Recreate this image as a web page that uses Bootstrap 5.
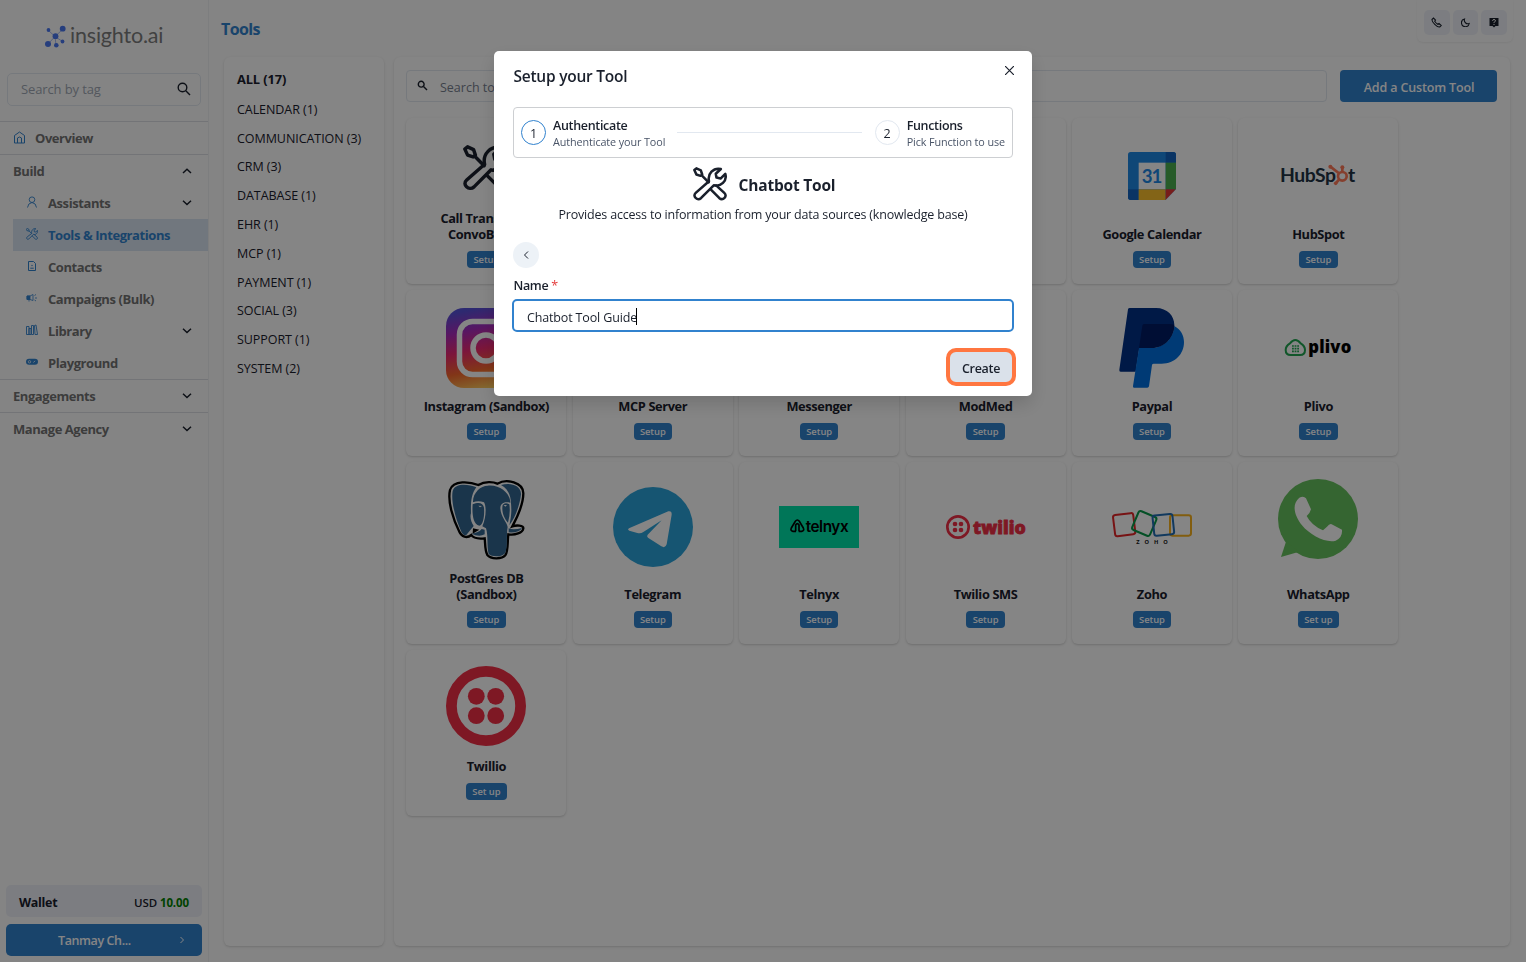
<!DOCTYPE html>
<html lang="en">
<head>
<meta charset="utf-8">
<meta name="viewport" content="width=device-width, initial-scale=1">
<title>insighto.ai - Tools</title>
<link href="https://cdn.jsdelivr.net/npm/bootstrap@5.3.0/dist/css/bootstrap.min.css" rel="stylesheet">
<style>
:root{--brand:#3182ce;--ink:#1a202c;--line:#e2e8f0}
body{font-family:"Open Sans","Noto Sans",sans-serif;font-size:12.5px;line-height:16px;color:var(--ink);background:#fdfdfd;height:962px;overflow:hidden}
svg{display:block;flex:none}
.shell{height:962px}
.side{width:209px;border-right:1px solid #f0f1f4;background:#fefefe}
.brand-row{height:73px;padding:25px 0 0 44px}
.brand-row svg,.tool>svg{overflow:visible}
.tag-box{height:33px;margin:0 7px;border:1px solid var(--line);border-radius:5px;padding:0 9px 2px 13px;color:#a0a8b4;font-size:13px;letter-spacing:-.12px}
.side-row{height:33px;padding:0 13px;font-weight:700;color:#747474;letter-spacing:-.44px;font-size:13px;border-top:1px solid #dcdfe4}
.side-row.home{margin-top:15px}
.side-row.home svg{margin:-1px 9px 0 0}
.side-row .chev,.sub-row .chev{margin-left:auto;margin-right:2px}
.sub-row{height:32px;margin-left:13px;padding:0 13px;font-weight:700;color:#747474;letter-spacing:-.42px;font-size:13px}
.sub-row>svg:first-child{margin-right:10px;color:var(--brand);margin-top:-3px}
.sub-row.on{background:#d8e4f2;color:var(--brand)}
.wallet{height:32px;margin:0 6px 7px;border-radius:5px;background:#edf0f8;padding:3px 13px 0;font-weight:700;letter-spacing:-.3px}
.wallet small{font-size:11.5px;font-weight:600;letter-spacing:-.1px}
.user-btn{height:32px;margin:0 7px 6px 6px;border-radius:5px;background:var(--brand);color:#fff;font-weight:600;letter-spacing:-.4px;width:196px;padding:0 17px 0 52px}
.user-btn span{padding-top:2px}
.page-title{font-weight:700;font-size:16px;letter-spacing:-.6px;color:var(--brand);padding:19px 0 0 12px;line-height:20px}
.quick{width:96px;height:42px;border-radius:0 0 6px 6px;box-shadow:0 1px 2px rgba(0,0,0,.06);margin-right:13px;padding:10px 6px 7px 7px;gap:3px}
.quick span{width:26px;height:25px;border-radius:5px;background:#edf0f8}
.panel{border-radius:6px;box-shadow:0 1px 3px rgba(0,0,0,.1),0 1px 2px rgba(0,0,0,.06);background:#fff;height:889px}
.cats{width:160px;padding:9px 13px;font-size:12.5px;letter-spacing:-.06px}
.cats div{height:28.8px;line-height:30px;white-space:nowrap}
.cats div:first-child{font-weight:700;font-size:12.8px;letter-spacing:-.1px;line-height:27.5px}
.find{height:32px;border:1px solid var(--line);border-radius:4px;color:#77808f;padding:3px 10px 0;width:921px}
.find svg{margin:-4px 12px 0 0}
.add-btn{width:157px;height:32px;border-radius:4px;background:var(--brand);color:#fff;font-weight:600;letter-spacing:-.15px;padding:3px 0 0 1px}
.tools{display:grid;grid-template-columns:repeat(6,160px);grid-template-rows:166px 166px 182px 166px;gap:6px 6.4px;margin:16px 0 0 .4px}
.tool{border-radius:6px;box-shadow:0 1px 3px rgba(0,0,0,.1),0 1px 2px rgba(0,0,0,.08);padding:18px 10px 16px}
.tool.low{padding-top:25px}
.tool.whats{padding-top:17px}
.tool.ring{padding-top:16px}
.tool b{margin-top:auto;font-size:12.8px;letter-spacing:-.37px;line-height:15.5px;white-space:nowrap;text-align:center}
.tool i{font-style:normal;font-size:9.4px;font-weight:600;letter-spacing:-.05px;line-height:17px;height:17px;padding:0 6.3px;border-radius:4px;background:var(--brand);color:#fff;margin-top:9px}
.shade{position:fixed;inset:0;background:rgba(0,0,0,.48)}
.dialog-box{width:538px;height:345px;margin:51px 0 0 494px;border-radius:5px;background:#fff;padding:15px 19px;box-shadow:0 8px 18px rgba(0,0,0,.15)}
.dialog-box h1{font-size:15.5px;font-weight:600;letter-spacing:-.24px;line-height:21px;height:20px;margin:0;padding-left:.5px}
.steps{height:51px;border:1px solid #cdcfd2;border-radius:4px;margin-top:21px;padding:0 7px}
.dot{width:25px;height:25px;border-radius:50%;border:1px solid var(--line);font-size:12.5px;padding-top:2px}
.dot.on{border-color:var(--brand)}
.step-t{font-weight:600;letter-spacing:-.32px;line-height:17px;padding-top:2px}
.step-d{font-size:10.8px;letter-spacing:-.1px;color:#4a5568;line-height:16px}
.rule{height:1px;background:var(--line);flex:1;margin:0 13px 0 12px}
.tool-name{font-size:15.5px;font-weight:700;letter-spacing:-.2px;padding-top:1.5px}
.desc{letter-spacing:-.19px;margin-top:6px}
.back{width:26px;height:26px;border-radius:50%;background:#edf2f7;margin-top:19px}
.lab{font-weight:600;letter-spacing:-.35px;margin-top:9.5px;padding-left:.5px}
.field{height:33px;border:2px solid var(--brand);border-radius:5px;margin:5.500px -1px 0;padding:4px 13px 0;letter-spacing:-.15px}
.caret{width:1px;height:17px;background:#000;margin:-3px 0 0 -1px}
.create{width:70px;height:38px;border:4px solid #ff7640;border-radius:10px;background:#dae1ea;font-weight:600;letter-spacing:-.3px;margin:16px -3px 0 auto;padding-top:3px}
</style>
</head>
<body>
<svg width="0" height="0" class="position-absolute">
<symbol id="wrench" viewBox="0 0 100 100"><g fill="none" stroke="currentColor" stroke-width="7.500" stroke-linejoin="round" stroke-linecap="round"><path d="M4 9L10 4L23 10L27 22L22 26L10 22ZM25 24L46 45"/><path d="M47 42C42 20 60 1 82 6L67 20L69 31L81 34L95 20C101 41 82 59 61 54L24 91C13 101 -3 86 8 76Z"/><path d="M52 66L77 91C88 101 103 86 92 76L68 54"/></g></symbol>
<symbol id="down" viewBox="0 0 12 12"><path d="M2 3.800L6 7.500L10 3.800" fill="none" stroke="#1a202c" stroke-width="1.500"/></symbol>
<symbol id="up" viewBox="0 0 12 12"><path d="M2 8L6 4.300L10 8" fill="none" stroke="#1a202c" stroke-width="1.500"/></symbol>
</svg>
<div class="shell d-flex">
<aside class="side d-flex flex-column flex-shrink-0">
  <div class="brand-row">
    <svg width="122" height="28" viewBox="0 0 122 28"><g stroke="#8fa8f0" stroke-width=".8" fill="none"><path d="M4 5L11 11.500L19 4M4 19L11 11.500L12 20M11 11.500L18.500 16.500"/></g><g fill="#4a78f0"><circle cx="4.500" cy="5" r="1.900"/><circle cx="18.700" cy="3.700" r="2.900"/><circle cx="11.500" cy="11.200" r="2.900"/><circle cx="4" cy="19" r="3"/><circle cx="12.300" cy="20.300" r="2.300"/><circle cx="18.500" cy="16.500" r="1.900"/></g><text x="26" y="17.500" textLength="93.500" font-family="Lato" font-size="21.500" fill="#7d7d7d">insighto.ai</text></svg>
  </div>
  <div class="tag-box d-flex align-items-center justify-content-between">Search by tag
    <svg width="14" height="14" viewBox="0 0 14 14" fill="none" stroke="#1a202c" stroke-width="1.400"><circle cx="5.500" cy="5.500" r="4.300"/><path d="M8.800 8.800L13 13"/></svg></div>
  <div class="side-row home d-flex align-items-center">
    <svg width="13" height="13" viewBox="0 0 13 13" fill="none" stroke="#3182ce"><path d="M1.500 12V4.500L6.500 1L11.500 4.500V12ZM4.500 12V7Q6.500 5 8.500 7V12"/></svg><span>Overview</span></div>
  <div class="side-row d-flex align-items-center">Build<svg class="chev" width="12" height="12"><use href="#up"/></svg></div>
  <div class="sub-row d-flex align-items-center"><svg width="12" height="12" viewBox="0 0 12 12" fill="none" stroke="currentColor" stroke-width=".9"><circle cx="6" cy="3.700" r="2.800"/><path d="M1.500 11.500Q2 7 6 6.500Q10 7 10.500 11.500"/></svg>Assistants<svg class="chev" width="12" height="12"><use href="#down"/></svg></div>
  <div class="sub-row on d-flex align-items-center"><svg width="12" height="12"><use href="#wrench"/></svg>Tools &amp; Integrations</div>
  <div class="sub-row d-flex align-items-center"><svg width="12" height="12" viewBox="0 0 12 12" fill="none" stroke="currentColor"><path d="M2.500 1.500H7.500L9.500 3.500V10.500H2.500Z"/><circle cx="6" cy="5.500" r=".7" fill="currentColor" stroke="none"/><path d="M4.300 8.200H7.700"/></svg>Contacts</div>
  <div class="sub-row d-flex align-items-center"><svg width="12" height="12" viewBox="0 0 12 12" fill="none" stroke="currentColor" stroke-width=".8"><path d="M1 4H4L7 2.500V8.500L4 7.500H1ZM3 8V9.500M9 6H11M8.500 3.500L10 2.500M8.500 8L10 9"/><path d="M1 4H4V7.500H1Z" fill="currentColor"/></svg>Campaigns (Bulk)</div>
  <div class="sub-row d-flex align-items-center"><svg width="12" height="12" viewBox="0 0 12 12" fill="none" stroke="currentColor" stroke-width=".9"><path d="M.5 2.500H3V10.500H.5ZM3 4.500H5V10.500H3ZM5.500 1.500H7.500V10.500H5.500ZM8.500 1.500L10 1L11.500 10.500H9Z"/></svg>Library<svg class="chev" width="12" height="12"><use href="#down"/></svg></div>
  <div class="sub-row d-flex align-items-center"><svg width="12" height="12" viewBox="0 0 12 12"><rect y="2.800" width="12" height="6" rx="3" fill="#3182ce"/><circle cx="3.500" cy="5.800" r="1.200" fill="none" stroke="#fff" stroke-width=".7"/><path d="M7.500 6.500L9 4.800" stroke="#fff" stroke-width=".8"/></svg>Playground</div>
  <div class="side-row d-flex align-items-center">Engagements<svg class="chev" width="12" height="12"><use href="#down"/></svg></div>
  <div class="side-row d-flex align-items-center">Manage Agency<svg class="chev" width="12" height="12"><use href="#down"/></svg></div>
  <div class="wallet d-flex align-items-center justify-content-between mt-auto">Wallet<small>USD <span style="color:#008000;font-weight:700">10.00</span></small></div>
  <div class="user-btn d-flex align-items-center justify-content-between"><span>Tanmay Ch...</span><svg width="6" height="8" viewBox="0 0 6 8" fill="none" stroke="#fff"><path d="M1.500 1L4.500 4L1.500 7"/></svg></div>
</aside>
<main class="flex-grow-1">
  <div class="d-flex justify-content-between" style="height:57px">
    <div class="page-title">Tools</div>
    <div class="quick d-flex">
      <span class="d-flex align-items-center justify-content-center"><svg width="11" height="11" viewBox="0 0 11 11" fill="none" stroke="#1a202c" stroke-width="1.100"><path d="M1 2.500L2.500 1L4.500 3L3.700 4.200Q5 6.200 6.800 7.300L8 6.500L10.200 8.500L8.700 10Q7 10.500 3.800 7.300Q.6 4 1 2.500Z"/></svg></span>
      <span class="d-flex align-items-center justify-content-center"><svg width="9" height="9" viewBox="0 0 9 9" fill="none" stroke="#1a202c" stroke-width="1.100"><path d="M3.500 1A3.900 3.900 0 1 0 8.200 5.500A3.600 3.600 0 0 1 3.500 1Z"/></svg></span>
      <span class="d-flex align-items-center justify-content-center"><svg width="10" height="11" viewBox="0 0 10 11"><path d="M.5 1H9.500V9H6.500L5 10.500L3.500 9H.5Z" fill="#1a202c"/><path d="M3.500 3.800Q3.700 2.500 5 2.500T6.500 3.700Q6.500 4.500 5.500 5T5 6M5 7V8" fill="none" stroke="#fff"/></svg></span>
    </div>
  </div>
  <div class="d-flex" style="padding-left:15px;gap:10px">
    <div class="panel cats"><div>ALL (17)</div><div>CALENDAR (1)</div><div>COMMUNICATION (3)</div><div>CRM (3)</div><div>DATABASE (1)</div><div>EHR (1)</div><div>MCP (1)</div><div>PAYMENT (1)</div><div>SOCIAL (3)</div><div>SUPPORT (1)</div><div>SYSTEM (2)</div></div>
    <div class="panel" style="width:1116px;padding:13px 12px">
      <div class="d-flex" style="gap:13px">
        <div class="find d-flex align-items-center"><svg width="11" height="11" viewBox="0 0 11 11" fill="none" stroke="#1a202c" stroke-width="1.400"><circle cx="4.200" cy="4.200" r="2.900"/><path d="M6.500 6.500L10 10"/></svg><span>Search tools</span></div>
        <div class="add-btn d-flex align-items-center justify-content-center">Add a Custom Tool</div>
      </div>
      <div class="tools">
        <div class="tool d-flex flex-column align-items-center"><svg width="46" height="46" style="margin-top:9px"><use href="#wrench"/></svg><b>Call Transfer to<br>ConvoBridge</b><i>Setup</i></div>
        <div class="tool"></div><div class="tool"></div><div class="tool"></div>
        <div class="tool d-flex flex-column align-items-center"><svg width="80" height="80" viewBox="156 408 240 240"><rect x="204" y="456" width="144" height="144" rx="8" fill="#1e88e5"/><path d="M236 488H317V568H236Z" fill="#fff"/><path d="M317 456H340Q348 456 348 464V488H317ZM204 568H236V600H212Q204 600 204 592Z" fill="#1565c0"/><path d="M317 488H348V568H317Z" fill="#4caf50"/><path d="M236 568H317V600H236Z" fill="#fbc02d"/><path d="M317 568H348L317 600Z" fill="#e53935"/><path d="M317 600L348 568V601Z" fill="#fff"/><text x="245" y="549" textLength="62" font-family="Lato" font-weight="700" font-size="56" fill="#1e88e5">31</text></svg><b>Google Calendar</b><i>Setup</i></div>
        <div class="tool d-flex flex-column align-items-center"><svg width="80" height="80" viewBox="654 408 240 240"><text x="660" y="545" textLength="168" font-family="Lato" font-weight="700" font-size="58" fill="#213343">HubSp</text><text x="864" y="545" font-family="Lato" font-weight="700" font-size="58" fill="#213343">t</text><g fill="none" stroke="#ff7a59" stroke-width="8"><circle cx="847" cy="529" r="13"/><path d="M847 514V502M836 519L811 500M836 540L827 550"/></g><g fill="#ff7a59"><circle cx="811" cy="500" r="6"/><circle cx="847" cy="502" r="6"/><circle cx="827" cy="550" r="5.500"/></g></svg><b>HubSpot</b><i>Setup</i></div>

        <div class="tool d-flex flex-column align-items-center"><svg width="80" height="80" viewBox="0 0 80 80"><defs><linearGradient id="ig" x1=".4" y1="0" x2=".6" y2="1"><stop stop-color="#5651d8"/><stop offset=".25" stop-color="#a92bbd"/><stop offset=".5" stop-color="#ee2a6f"/><stop offset=".75" stop-color="#f9692d"/><stop offset="1" stop-color="#ffd261"/></linearGradient></defs><rect width="80" height="80" rx="18" fill="url(#ig)"/><g fill="none" stroke="#fff" stroke-width="5.500"><rect x="13.500" y="13.500" width="53" height="53" rx="13"/><circle cx="40" cy="40" r="13"/></g><circle cx="55" cy="25" r="3" fill="#fff"/></svg><b>Instagram (Sandbox)</b><i>Setup</i></div>
        <div class="tool d-flex flex-column align-items-center"><b>MCP Server</b><i>Setup</i></div>
        <div class="tool d-flex flex-column align-items-center"><b>Messenger</b><i>Setup</i></div>
        <div class="tool d-flex flex-column align-items-center"><b>ModMed</b><i>Setup</i></div>
        <div class="tool d-flex flex-column align-items-center"><svg width="80" height="80" viewBox="156 54 240 240"><path d="M209 54H288C322 54 343 78 343 104C343 145 310 173 275 173H238L227 245H182Q177 245 178 239L204 58Q205 54 209 54Z" fill="#003087"/><path d="M343 108C362 118 372 137 372 156C372 192 345 221 305 221H281Q277 221 276 225L267 289Q266 293 262 293H222Q218 293 219 288L237 174H275C310 173 340 147 343 108Z" fill="#0070e0"/><path d="M252 102H330Q343 102 343 108C340 147 310 174 275 174H237L247 107Q248 102 252 102Z" fill="#001c64"/></svg><b>Paypal</b><i>Setup</i></div>
        <div class="tool d-flex flex-column align-items-center"><svg width="80" height="80" viewBox="654 54 240 240"><path d="M690 160Q706 140 722 160Q735 168 735 180Q735 195 720 195H692Q677 195 677 180Q677 168 690 160Z" fill="none" stroke="#22a651" stroke-width="6"/><path d="M696 168H717M696 176H717M696 184H717" stroke="#22a651" stroke-width="5" stroke-dasharray="5.500 2.300"/><text x="745" y="188" textLength="129" font-family="Open Sans" font-weight="800" font-size="50" fill="#000">plivo</text></svg><b>Plivo</b><i>Setup</i></div>

        <div class="tool d-flex flex-column align-items-center"><svg width="80" height="80" viewBox="138 75 240 240"><path d="M150 105C160 74 210 80 235 90C255 78 280 80 292 86C320 70 370 82 370 115C370 150 350 190 337 214C348 210 371 210 370 220C368 234 345 241 325 238C322 260 325 290 316 301C306 313 272 313 262 300C254 285 256 262 254 250C235 252 220 250 214 240C200 252 185 245 178 230C160 195 142 140 150 105Z" fill="#fff" stroke="#000" stroke-width="7"/><g fill="#336791"><path d="M158 108C165 83 205 87 229 97C214 117 212 140 213 175C209 188 214 202 221 213L199 240C193 242 188 238 184 230C168 195 152 140 158 108Z"/><path d="M303 90C330 81 364 90 363 118C360 151 344 190 328 211C336 175 334 160 333 145C333 120 322 100 303 90Z"/><path d="M219 142C218 113 242 92 263 92C300 88 331 115 331 143C312 138 301 145 301 160C303 188 320 200 323 216C318 240 325 280 314 296C304 306 275 306 266 297C260 275 265 240 258 220L247 214C258 190 260 155 252 142Q235 135 219 142Z"/><path d="M218 148C235 140 250 143 252 158C254 180 250 210 238 212C218 209 216 173 218 148ZM308 150Q315 140 328 148Q332 175 324 203C312 190 304 170 308 150ZM215 236Q236 233 245 222L254 224V238Q237 247 215 236ZM326 220Q340 226 366 219Q358 234 326 232Z"/></g><path d="M219 220L238 224L218 236Z" fill="#000"/><path d="M235 152L246 153L240 157ZM311 150L321 150L316 155Z" fill="#fff"/></svg><b>PostGres DB<br>(Sandbox)</b><i>Setup</i></div>
        <div class="tool low d-flex flex-column align-items-center"><svg width="80" height="80" viewBox="639 95 240 240"><circle cx="759" cy="215" r="120" fill="#2ba3da"/><path d="M687 219L805 168Q816 166 815 178L800 267Q796 280 784 273L744 247Q739 243 743 238L785 195L730 230Q722 236 712 233L688 226Q681 223 687 219Z" fill="#fff"/></svg><b>Telegram</b><i>Setup</i></div>
        <div class="tool low d-flex flex-column align-items-center"><svg width="80" height="80" viewBox="132 96 240 240"><path d="M132 153H372V279H132Z" fill="#00e3aa"/><g fill="none" stroke="#000" stroke-width="5"><path d="M182 229V210Q187 202 192 210V229M183 229H174Q165 227 169 219L181 199Q187 191 193 199L205 219Q209 227 200 229H191"/></g><text x="212" y="230" textLength="129" font-family="Inter" font-weight="600" font-size="46" fill="#000">telnyx</text></svg><b>Telnyx</b><i>Setup</i></div>
        <div class="tool low d-flex flex-column align-items-center"><svg width="80" height="80" viewBox="633 96 240 240"><circle cx="669" cy="216" r="32" fill="none" stroke="#f22f46" stroke-width="8"/><g fill="#f22f46"><circle cx="660" cy="207" r="7"/><circle cx="678" cy="207" r="7"/><circle cx="660" cy="225" r="7"/><circle cx="678" cy="225" r="7"/></g><text x="714" y="237" textLength="158" lengthAdjust="spacingAndGlyphs" font-family="Open Sans" font-weight="800" font-size="55" fill="#f22f46" stroke="#f22f46" stroke-width="2.500">twilio</text></svg><b>Twilio SMS</b><i>Setup</i></div>
        <div class="tool low d-flex flex-column align-items-center"><svg width="80" height="80" viewBox="141 96 240 240"><g fill="none" stroke-width="6"><rect x="147" y="177" width="61" height="64" rx="7" stroke="#e42527" transform="rotate(-7 178 209)"/><rect x="209" y="175" width="58" height="61" rx="7" stroke="#089949" transform="rotate(23 238 205)"/><rect x="315" y="181" width="63" height="61" rx="7" stroke="#f9b21d"/><rect x="265" y="179" width="60" height="61" rx="7" stroke="#226db4" transform="rotate(-6 295 209)"/></g><text x="214" y="266" textLength="94" font-family="Open Sans" font-weight="700" font-size="17" fill="#111">ZOHO</text></svg><b>Zoho</b><i>Setup</i></div>
        <div class="tool whats d-flex flex-column align-items-center"><svg width="80" height="80" viewBox="639 72 240 240"><circle cx="759" cy="192" r="120" fill="#67c15e"/><path d="M648 306L664 257L700 291Z" fill="#67c15e"/><path d="M703 128Q716 122 723 130L738 163Q736 173 725 183Q739 211 774 226L786 215Q794 205 800 208L831 224Q833 248 812 257C785 266 735 241 711 211C688 182 679 148 703 128Z" fill="#fff"/></svg><b>WhatsApp</b><i>Set up</i></div>
        <div class="tool ring d-flex flex-column align-items-center"><svg width="80" height="80" viewBox="0 0 80 80"><circle cx="40" cy="40" r="34.600" fill="none" stroke="#f22f46" stroke-width="10.800"/><g fill="#f22f46"><circle cx="30.300" cy="30.300" r="8.400"/><circle cx="49.700" cy="30.300" r="8.400"/><circle cx="30.300" cy="49.700" r="8.400"/><circle cx="49.700" cy="49.700" r="8.400"/></g></svg><b>Twillio</b><i>Set up</i></div>
      </div>
    </div>
  </div>
</main>
</div>
<div class="shade">
  <div class="dialog-box">
    <div class="d-flex justify-content-between"><h1>Setup your Tool</h1><svg width="9" height="9" viewBox="0 0 9 9" stroke="#1a202c" stroke-width="1.200" style="margin-right:-1px"><path d="M0 0L9 9M9 0L0 9"/></svg></div>
    <div class="steps d-flex align-items-center">
      <div class="dot on d-flex align-items-center justify-content-center" style="margin-right:7px">1</div><div><div class="step-t">Authenticate</div><div class="step-d">Authenticate your Tool</div></div>
      <div class="rule"></div>
      <div class="dot d-flex align-items-center justify-content-center" style="margin-right:7px">2</div><div><div class="step-t">Functions</div><div class="step-d">Pick Function to use</div></div>
    </div>
    <div class="d-flex align-items-center justify-content-center" style="margin:9px 0 0 2px;gap:12px"><svg width="34" height="34"><use href="#wrench"/></svg><span class="tool-name">Chatbot Tool</span></div>
    <div class="desc text-center">Provides access to information from your data sources (knowledge base)</div>
    <div class="back d-flex align-items-center justify-content-center"><svg width="6" height="8" viewBox="0 0 6 8" fill="none" stroke="#1a202c"><path d="M5 .5L1.500 4L5 7.500"/></svg></div>
    <div class="lab">Name <span style="color:#e53e3e;font-weight:400">*</span></div>
    <div class="field d-flex align-items-center">Chatbot Tool Guide<div class="caret"></div></div>
    <div class="create d-flex align-items-center justify-content-center">Create</div>
  </div>
</div>
<script src="https://cdn.jsdelivr.net/npm/bootstrap@5.3.0/dist/js/bootstrap.bundle.min.js"></script>
</body>
</html>
